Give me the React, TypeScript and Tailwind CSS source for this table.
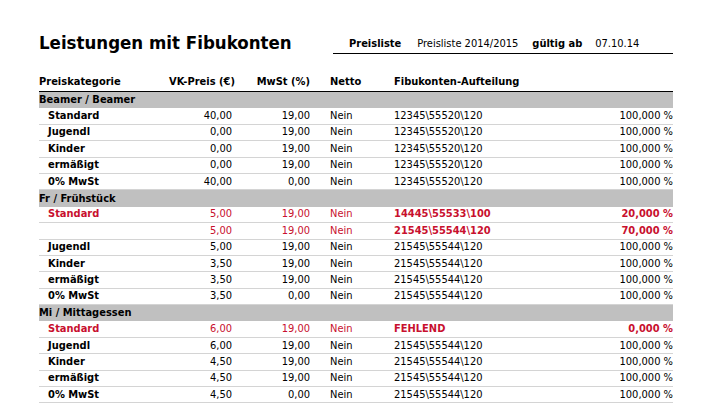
import React from "react";

type Row = {
  name?: string;
  vk: string;
  mwst: string;
  netto: string;
  fibu: string;
  pct: string;
  red?: boolean;
  boldFibu?: boolean;
};

type Section = { title: string; rows: Row[] };

const std = (name: string, vk: string, mwst: string, fibu: string): Row => ({
  name,
  vk,
  mwst,
  netto: "Nein",
  fibu,
  pct: "100,000 %",
});

const sections: Section[] = [
  {
    title: "Beamer / Beamer",
    rows: [
      std("Standard", "40,00", "19,00", "12345\\55520\\120"),
      std("Jugendl", "0,00", "19,00", "12345\\55520\\120"),
      std("Kinder", "0,00", "19,00", "12345\\55520\\120"),
      std("ermäßigt", "0,00", "19,00", "12345\\55520\\120"),
      std("0% MwSt", "40,00", "0,00", "12345\\55520\\120"),
    ],
  },
  {
    title: "Fr / Frühstück",
    rows: [
      { name: "Standard", vk: "5,00", mwst: "19,00", netto: "Nein", fibu: "14445\\55533\\100", pct: "20,000 %", red: true, boldFibu: true },
      { name: "", vk: "5,00", mwst: "19,00", netto: "Nein", fibu: "21545\\55544\\120", pct: "70,000 %", red: true, boldFibu: true },
      std("Jugendl", "5,00", "19,00", "21545\\55544\\120"),
      std("Kinder", "3,50", "19,00", "21545\\55544\\120"),
      std("ermäßigt", "3,50", "19,00", "21545\\55544\\120"),
      std("0% MwSt", "3,50", "0,00", "21545\\55544\\120"),
    ],
  },
  {
    title: "Mi / Mittagessen",
    rows: [
      { name: "Standard", vk: "6,00", mwst: "19,00", netto: "Nein", fibu: "FEHLEND", pct: "0,000 %", red: true, boldFibu: true },
      std("Jugendl", "6,00", "19,00", "21545\\55544\\120"),
      std("Kinder", "4,50", "19,00", "21545\\55544\\120"),
      std("ermäßigt", "4,50", "19,00", "21545\\55544\\120"),
      std("0% MwSt", "4,50", "0,00", "21545\\55544\\120"),
    ],
  },
];

const grid = "grid grid-cols-[130px_63px_78px_84px_200px_1fr] whitespace-nowrap";

function DataRow({ r }: { r: Row }) {
  const c = r.red ? "text-[#c8102e]" : "text-black";
  return (
    <div className={`${grid} items-center h-[16.4px] border-b border-[#d4d4d4] ${c}`}>
      <div className="pl-[9px] font-bold">{r.name}</div>
      <div className="text-right">{r.vk}</div>
      <div className="text-right">{r.mwst}</div>
      <div className="pl-[20px]">{r.netto}</div>
      <div className={r.boldFibu ? "font-bold" : ""}>{r.fibu}</div>
      <div className={`text-right ${r.boldFibu ? "font-bold" : ""}`}>{r.pct}</div>
    </div>
  );
}

export default function App() {
  return (
    <div
      className="w-[726px] h-[403px] bg-white overflow-hidden text-black"
      style={{ fontFamily: '"DejaVu Sans Condensed", "DejaVu Sans", sans-serif' }}
    >
      <div className="flex items-end pl-[39px] pt-[32px]">
        <div className="w-[294px] text-[18.5px] leading-[22px] font-bold whitespace-nowrap">Leistungen mit Fibukonten</div>
        <div className="w-[340px] border-b border-black flex items-end pl-[16px] pb-[2px] text-[11px] leading-[14px] whitespace-nowrap">
          <span className="font-bold">Preisliste</span>
          <span className="ml-[16px]">Preisliste 2014/2015</span>
          <span className="ml-[14px] font-bold">gültig ab</span>
          <span className="ml-[13px]">07.10.14</span>
        </div>
      </div>

      <div className="ml-[39px] w-[634px] mt-[19px] text-[11px] leading-[14px]">
        <div className={`${grid} items-end h-[19px] pb-[2px] border-b border-black font-bold`}>
          <div>Preiskategorie</div>
          <div className="text-right">VK-Preis (€)</div>
          <div className="text-right">MwSt (%)</div>
          <div className="pl-[20px]">Netto</div>
          <div>Fibukonten-Aufteilung</div>
          <div></div>
        </div>
        {sections.map((s) => (
          <div key={s.title}>
            <div className="h-[16.4px] bg-[#c0c0c0] font-bold flex items-center">{s.title}</div>
            {s.rows.map((r, i) => (
              <DataRow key={i} r={r} />
            ))}
          </div>
        ))}
      </div>
    </div>
  );
}
